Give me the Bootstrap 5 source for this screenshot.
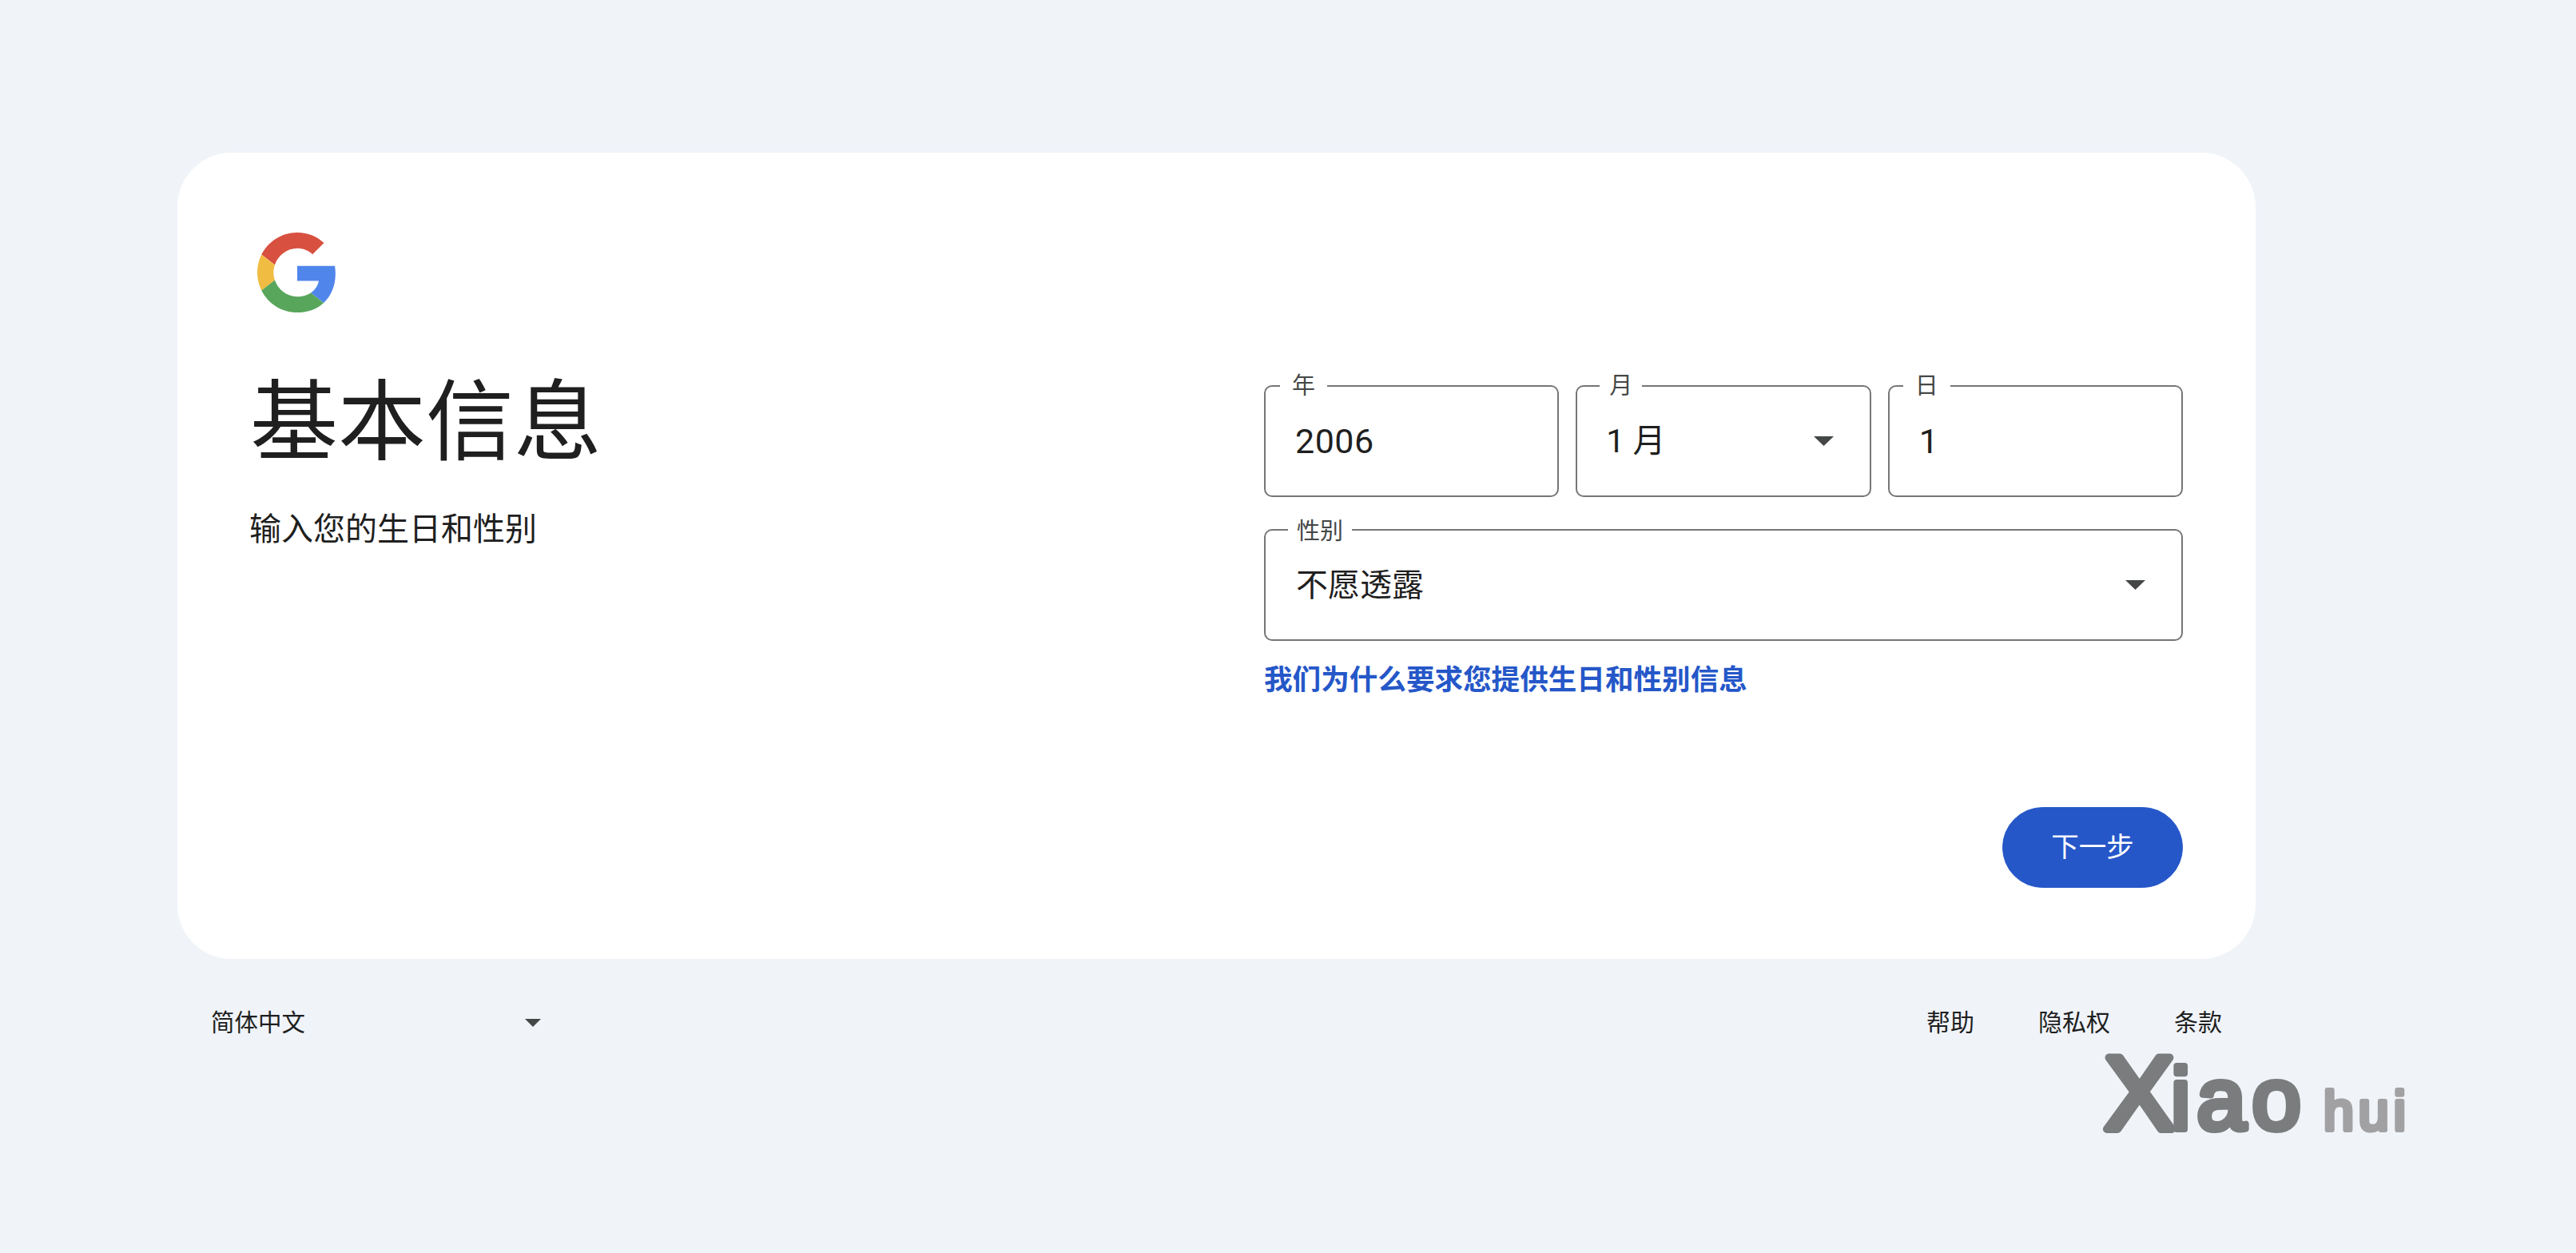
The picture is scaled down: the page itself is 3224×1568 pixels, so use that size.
<!DOCTYPE html>
<html lang="zh-CN">

<head>
    <meta charset="UTF-8">
    <meta name="viewport" content="width=device-width, initial-scale=1.0">
    <title>基本信息</title>
    <link href="https://cdn.jsdelivr.net/npm/bootstrap@5.3.2/dist/css/bootstrap.min.css" rel="stylesheet">
    <style>
        body {
            background: #f0f4f9;
            color: #1f1f1f;
            font-family: Roboto, "Noto Sans CJK SC", sans-serif;
            min-height: 1568px;
        }

        .signup-wrap {
            width: 2601px;
            margin: 191px 0 0 222px;
        }

        .signup-card {
            background: #fff;
            border-radius: 68px;
            height: 1009px;
            padding: 100px 91px 89px 100px;
        }

        .g-logo {
            width: 100px;
            height: 100px;
        }

        .page-title {
            font-size: 110px;
            font-weight: 400;
            line-height: 130px;
            margin: 74px 0 0 -9px;
        }

        .page-sub {
            font-size: 40px;
            line-height: 56px;
            margin: 40px 0 0 -10px;
        }

        .form-side {
            width: 1150px;
            margin-top: 191px;
        }

        .field-row {
            gap: 21px;
            margin-bottom: 40px;
        }

        .outlined {
            position: relative;
            flex: 1 1 0;
        }

        .outlined .form-control,
        .outlined .form-select {
            height: 140px;
            border: 2px solid #747775;
            border-radius: 10px;
            color: #1f1f1f;
            font-size: 41px;
            padding: 2px 0 0 36px;
            box-shadow: none;
        }

        .outlined .form-control {
            font-size: 43px;
            letter-spacing: .5px;
            padding: 0 0 0 37px;
        }

        .outlined .form-select {
            background-image: url("data:image/svg+xml,%3Csvg xmlns='http://www.w3.org/2000/svg' viewBox='0 0 25 12'%3E%3Cpath fill='%23444746' d='M0 0h25L12.5 12z'/%3E%3C/svg%3E");
            background-size: 25px 12px;
            background-position: right 45px center;
        }

        .outlined .gender-select {
            font-size: 40px;
            padding-left: 38px;
        }

        .field-label {
            position: absolute;
            top: -17px;
            left: 20px;
            background: #fff;
            color: #444746;
            font-size: 29px;
            line-height: 36px;
            padding: 0 15px;
        }

        .field-label.month-label {
            left: 30px;
            padding: 0 12px;
        }

        .field-label.day-label {
            left: 19px;
        }

        .field-label.gender-label {
            top: -15px;
            left: 30px;
            padding: 0 11px;
        }

        .why-link {
            display: block;
            color: #2557c8;
            font-size: 35.6px;
            font-weight: 700;
            line-height: 48px;
            text-decoration: none;
            margin-top: -15px;
        }

        .next-btn {
            width: 226px;
            height: 101px;
            border-radius: 51px;
            background: #2557c8;
            border-color: #2557c8;
            font-size: 34.5px;
            padding: 0;
        }

        .site-foot {
            padding: 0 42px;
            margin-top: 56px;
            font-size: 30px;
            line-height: 48px;
        }

        .lang-select {
            width: 430px;
            border: 0;
            background-color: transparent;
            color: #1f1f1f;
            font-size: 29.5px;
            line-height: 48px;
            padding: 0;
            box-shadow: none;
            background-image: url("data:image/svg+xml,%3Csvg xmlns='http://www.w3.org/2000/svg' viewBox='0 0 20 10'%3E%3Cpath fill='%23444746' d='M0 0h20L10 10z'/%3E%3C/svg%3E");
            background-size: 20px 10px;
            background-position: right 17px center;
        }

        .foot-links {
            gap: 80px;
        }

        .foot-links a {
            color: #1f1f1f;
            text-decoration: none;
        }

        .watermark {
            position: absolute;
            left: 2620px;
            top: 1285px;
        }

        .watermark text {
            font-family: "Liberation Sans", sans-serif;
            stroke-linejoin: round;
            stroke-linecap: round;
        }

        .wm-cap {
            font-size: 130px;
            fill: #7a7c7e;
            stroke: #7a7c7e;
            stroke-width: 10px;
        }

        .wm-main {
            font-size: 110px;
            fill: #7a7c7e;
            stroke: #7a7c7e;
            stroke-width: 8px;
            letter-spacing: 8px;
        }

        .wm-sub {
            font-size: 68px;
            fill: #a1a1a3;
            stroke: #a1a1a3;
            stroke-width: 6px;
            letter-spacing: 6px;
        }
    </style>
</head>

<body>
    <div class="signup-wrap">
        <div class="signup-card d-flex flex-column">
            <div class="d-flex justify-content-between flex-grow-1">
                <!-- Left side -->
                <div>
                    <svg class="g-logo d-block" viewBox="0 0 48 48">
                        <path fill="#d85040" d="M24 9.5c3.54 0 6.71 1.22 9.21 3.6l6.85-6.85C35.9 2.38 30.47 0 24 0 14.62 0 6.51 5.38 2.56 13.22l7.98 6.19C12.43 13.72 17.74 9.5 24 9.5z"/>
                        <path fill="#5086ec" d="M46.98 24.55c0-1.57-.15-3.09-.38-4.55H24v9.02h12.94c-.58 2.96-2.26 5.48-4.78 7.18l7.73 6c4.51-4.18 7.09-10.36 7.09-17.65z"/>
                        <path fill="#f0bc42" d="M10.53 28.59c-.48-1.45-.76-2.99-.76-4.59s.27-3.14.76-4.59l-7.98-6.19C.92 16.46 0 20.12 0 24c0 3.88.92 7.54 2.56 10.78l7.97-6.19z"/>
                        <path fill="#58a65c" d="M24 48c6.48 0 11.93-2.13 15.89-5.81l-7.73-6c-2.15 1.45-4.92 2.3-8.16 2.3-6.26 0-11.57-4.22-13.47-9.91l-7.98 6.19C6.51 42.62 14.62 48 24 48z"/>
                    </svg>
                    <h1 class="page-title">基本信息</h1>
                    <p class="page-sub">输入您的生日和性别</p>
                </div>

                <!-- Right side -->
                <div class="form-side">
                    <div class="d-flex field-row">
                        <div class="outlined">
                            <label class="field-label" for="year">年</label>
                            <input type="text" id="year" class="form-control" value="2006">
                        </div>
                        <div class="outlined">
                            <label class="field-label month-label" for="month">月</label>
                            <select id="month" class="form-select">
                                <option>1 月</option>
                            </select>
                        </div>
                        <div class="outlined">
                            <label class="field-label day-label" for="day">日</label>
                            <input type="text" id="day" class="form-control" value="1">
                        </div>
                    </div>
                    <div class="d-flex field-row">
                        <div class="outlined">
                            <label class="field-label gender-label" for="gender">性别</label>
                            <select id="gender" class="form-select gender-select">
                                <option>不愿透露</option>
                            </select>
                        </div>
                    </div>
                    <a class="why-link" href="#">我们为什么要求您提供生日和性别信息</a>
                </div>
            </div>
            <div class="d-flex justify-content-end">
                <button class="btn btn-primary next-btn">下一步</button>
            </div>
        </div>

        <!-- Footer -->
        <div class="site-foot d-flex justify-content-between align-items-center">
            <select class="form-select lang-select">
                <option>简体中文</option>
            </select>
            <div class="foot-links d-flex">
                <a href="#">帮助</a>
                <a href="#">隐私权</a>
                <a href="#">条款</a>
            </div>
        </div>
    </div>

    <svg class="watermark" width="420" height="170" viewBox="0 0 420 170">
        <text class="wm-cap" x="14" y="128">X</text>
        <text class="wm-main" x="97" y="128">iao</text>
        <text class="wm-sub" x="288" y="129">hui</text>
    </svg>
</body>

</html>
